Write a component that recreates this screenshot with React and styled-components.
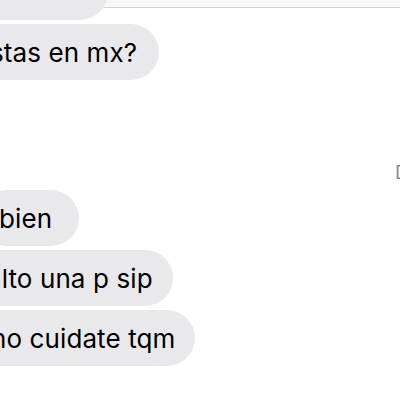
import styled, { createGlobalStyle } from "styled-components"

const Global = createGlobalStyle`
  body {
    margin: 0;
    background: #ffffff;
    overflow: hidden;
    font-family: Inter, "Liberation Sans", sans-serif;
  }
`

const Screen = styled.div`
  width: 400px;
  height: 400px;
  overflow: hidden;
  background: #ffffff;
`

const TopBar = styled.div`
  height: 7px;
  background: #f7f7f7;
  border-bottom: 1px solid #d4d4d6;
`

const Thread = styled.div`
  display: flex;
  flex-direction: column;
  align-items: flex-start;
  gap: 4px;
`

const Bubble = styled.div`
  box-sizing: border-box;
  height: 56px;
  display: flex;
  align-items: center;
  padding: 0 ${(p) => p.$pad || 22}px 0 20px;
  margin-left: ${(p) => p.$shift}px;
  margin-top: ${(p) => p.$top || 0}px;
  width: ${(p) => (p.$width ? p.$width + "px" : "auto")};
  background: #e9e9eb;
  border-radius: 28px;
  color: #000000;
  font-size: 26px;
  letter-spacing: 0.1px;
  white-space: nowrap;
`

const Stamp = styled.div`
  align-self: stretch;
  padding-left: 395px;
  margin: 77px 0 1px;
  font-size: 19px;
  line-height: 24px;
  color: #8e8e93;
  white-space: nowrap;
  overflow: hidden;
`

const earlier = [
  { text: "stas en mx?", shift: -30, pad: 22 },
]

const later = [
  { text: "bien", shift: -21, pad: 27 },
  { text: "alto una p sip", shift: -33, pad: 20 },
  { text: "no cuidate tqm", shift: -29, pad: 20 },
]

export default function App() {
  return (
    <Screen>
      <Global />
      <TopBar />
      <Thread>
        <Bubble $shift={-40} $top={-44} $width={148} />
        {earlier.map((m) => (
          <Bubble key={m.text} $shift={m.shift} $pad={m.pad}>{m.text}</Bubble>
        ))}
        <Stamp>Delivered</Stamp>
        {later.map((m) => (
          <Bubble key={m.text} $shift={m.shift} $pad={m.pad}>{m.text}</Bubble>
        ))}
      </Thread>
    </Screen>
  )
}
